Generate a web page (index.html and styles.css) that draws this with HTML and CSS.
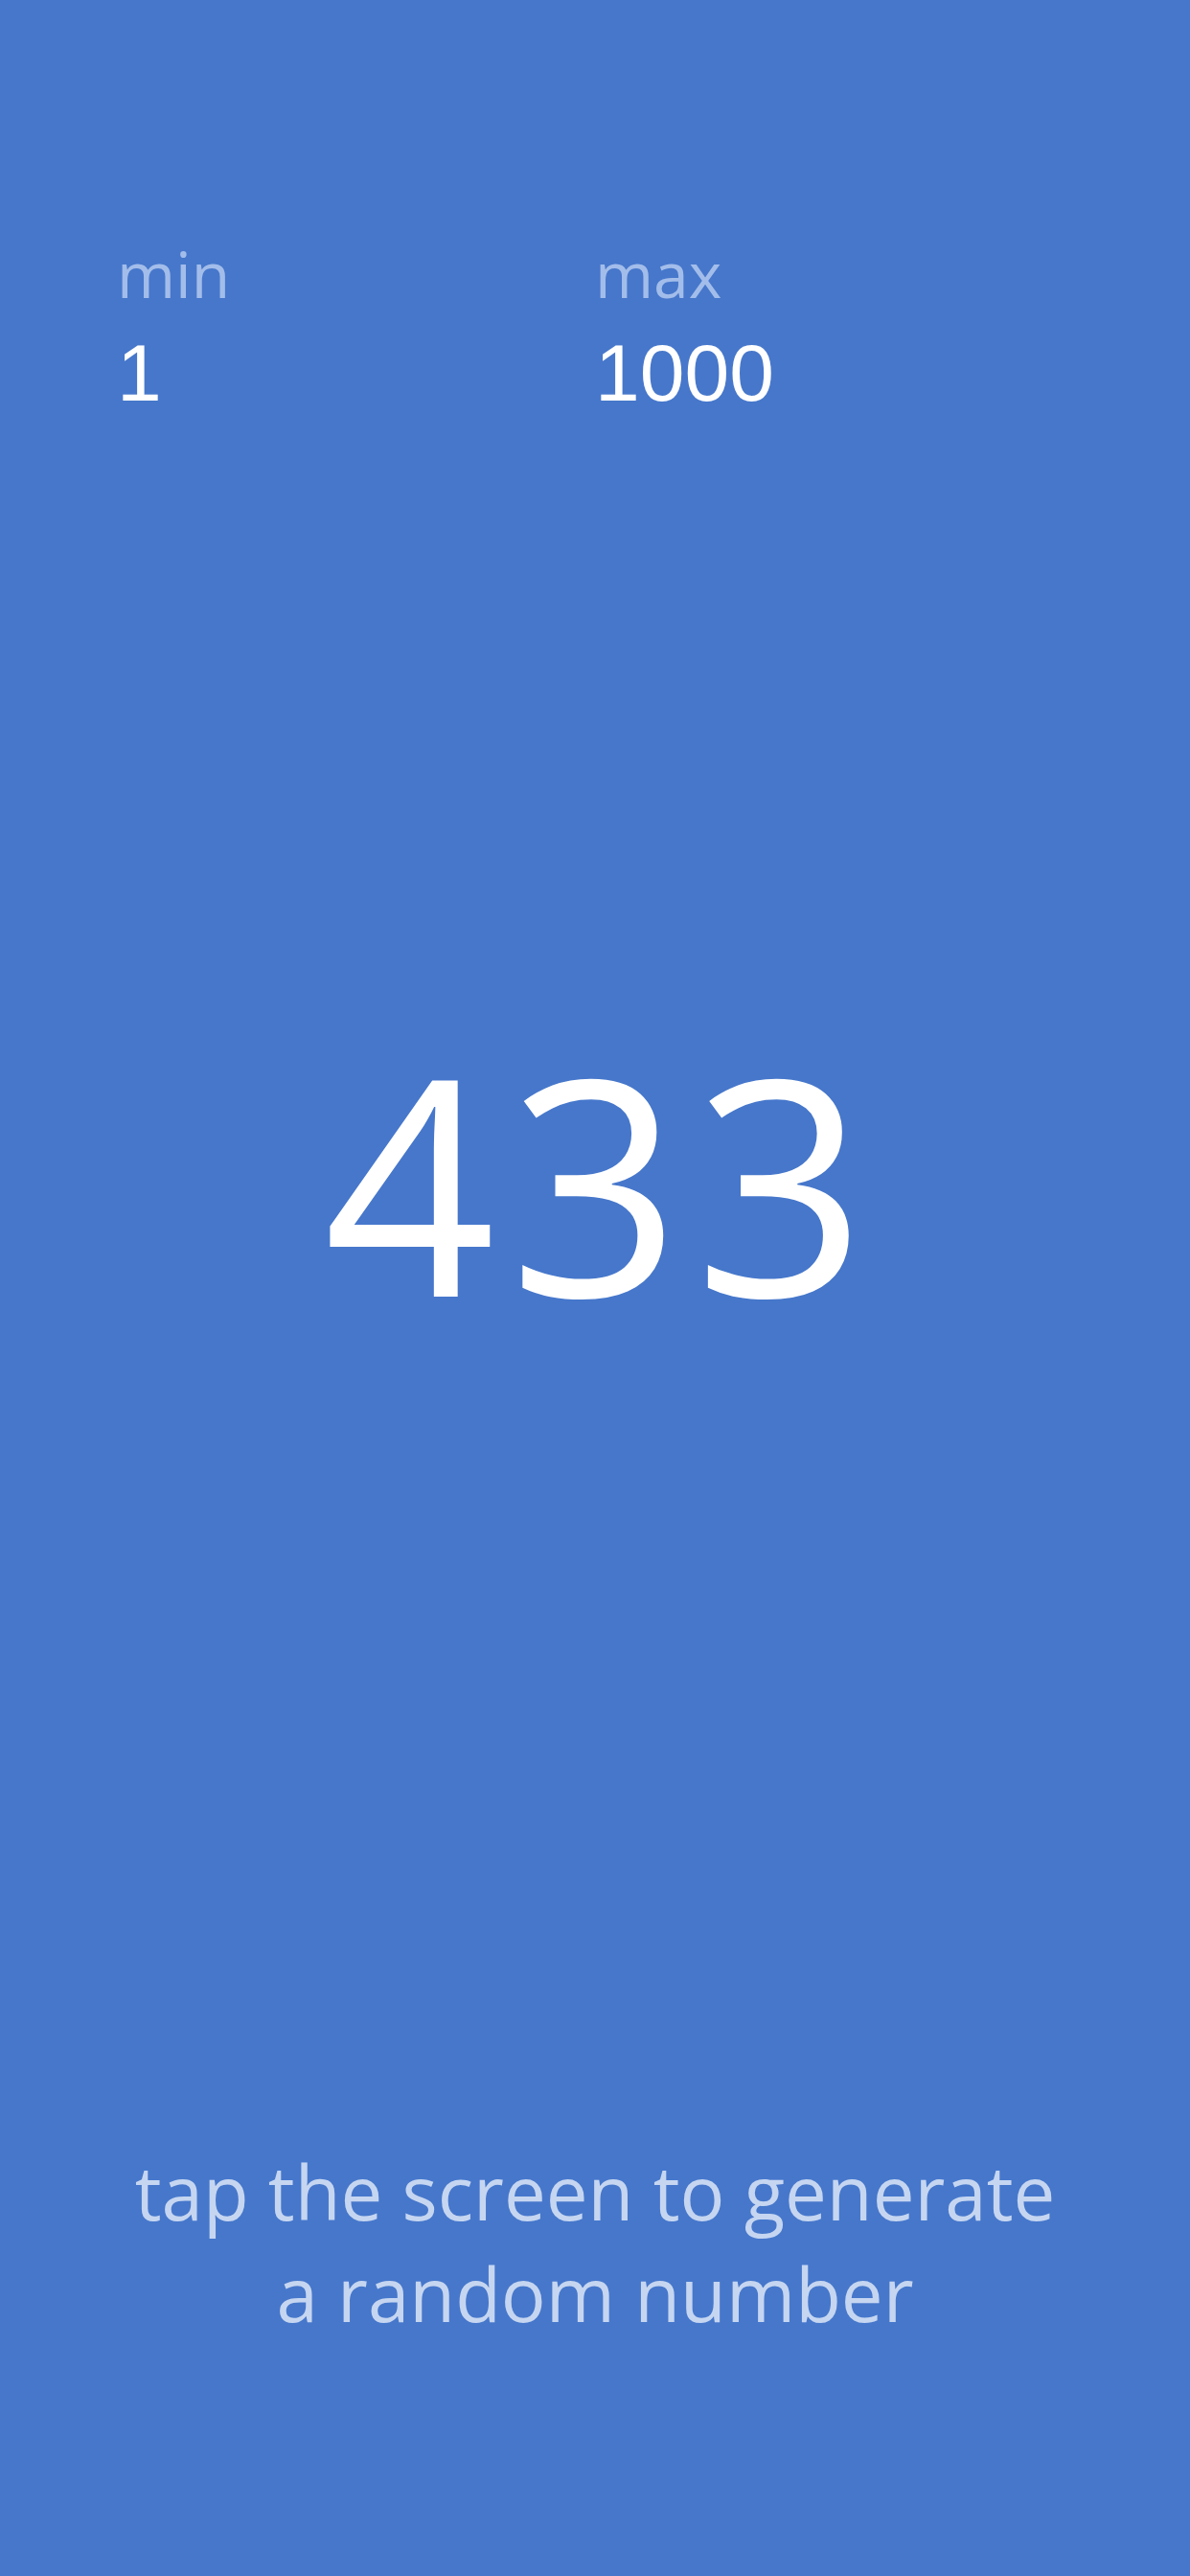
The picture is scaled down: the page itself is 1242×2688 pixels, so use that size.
FILE: index.html
```html
<!DOCTYPE html>
<html lang="en">
<head>
    <meta charset="UTF-8" />
    <meta name="viewport" content="width=device-width, initial-scale=1" />
    <title>Random Number</title>
    <link rel="stylesheet" href="styles.css">
</head>
<body>
    <div class="screen">
        <div class="range">
            <div class="range-item">
                <div class="label">min</div>
                <div class="value">1</div>
            </div>
            <div class="range-item">
                <div class="label">max</div>
                <div class="value">1000</div>
            </div>
        </div>
        <div class="result">433</div>
        <div class="hint">tap the screen to generate<br>a random number</div>
    </div>
</body>
</html>
```

FILE: styles.css
```css
:root {
    --bg-blue: #4677cb;
    --label-color: #a3bdea;
    --hint-color: #c6d6f1;
}

body {
    margin: 0;
    background-color: var(--bg-blue);
    font-family: 'Open Sans', sans-serif;
    color: #fff;
}

.screen {
    height: 2688px;
    display: flex;
    flex-direction: column;
}

/* min / max row */
.range {
    display: grid;
    grid-template-columns: 1fr 1fr;
    padding: 246px 122px 0;
}

.label {
    font-size: 66px;
    line-height: 1.2;
    color: var(--label-color);
}

.value {
    font-family: "Liberation Sans", Arial, sans-serif;
    font-size: 84px;
    line-height: 1.2;
    margin-top: 14px;
}

.result {
    margin-top: 622px;
    font-size: 314px;
    line-height: 338px;
    letter-spacing: 14px;
    text-indent: 14px;
    text-align: center;
}

.hint {
    margin-top: auto;
    padding-bottom: 242px;
    font-size: 78px;
    line-height: 106px;
    text-align: center;
    color: var(--hint-color);
}
```
